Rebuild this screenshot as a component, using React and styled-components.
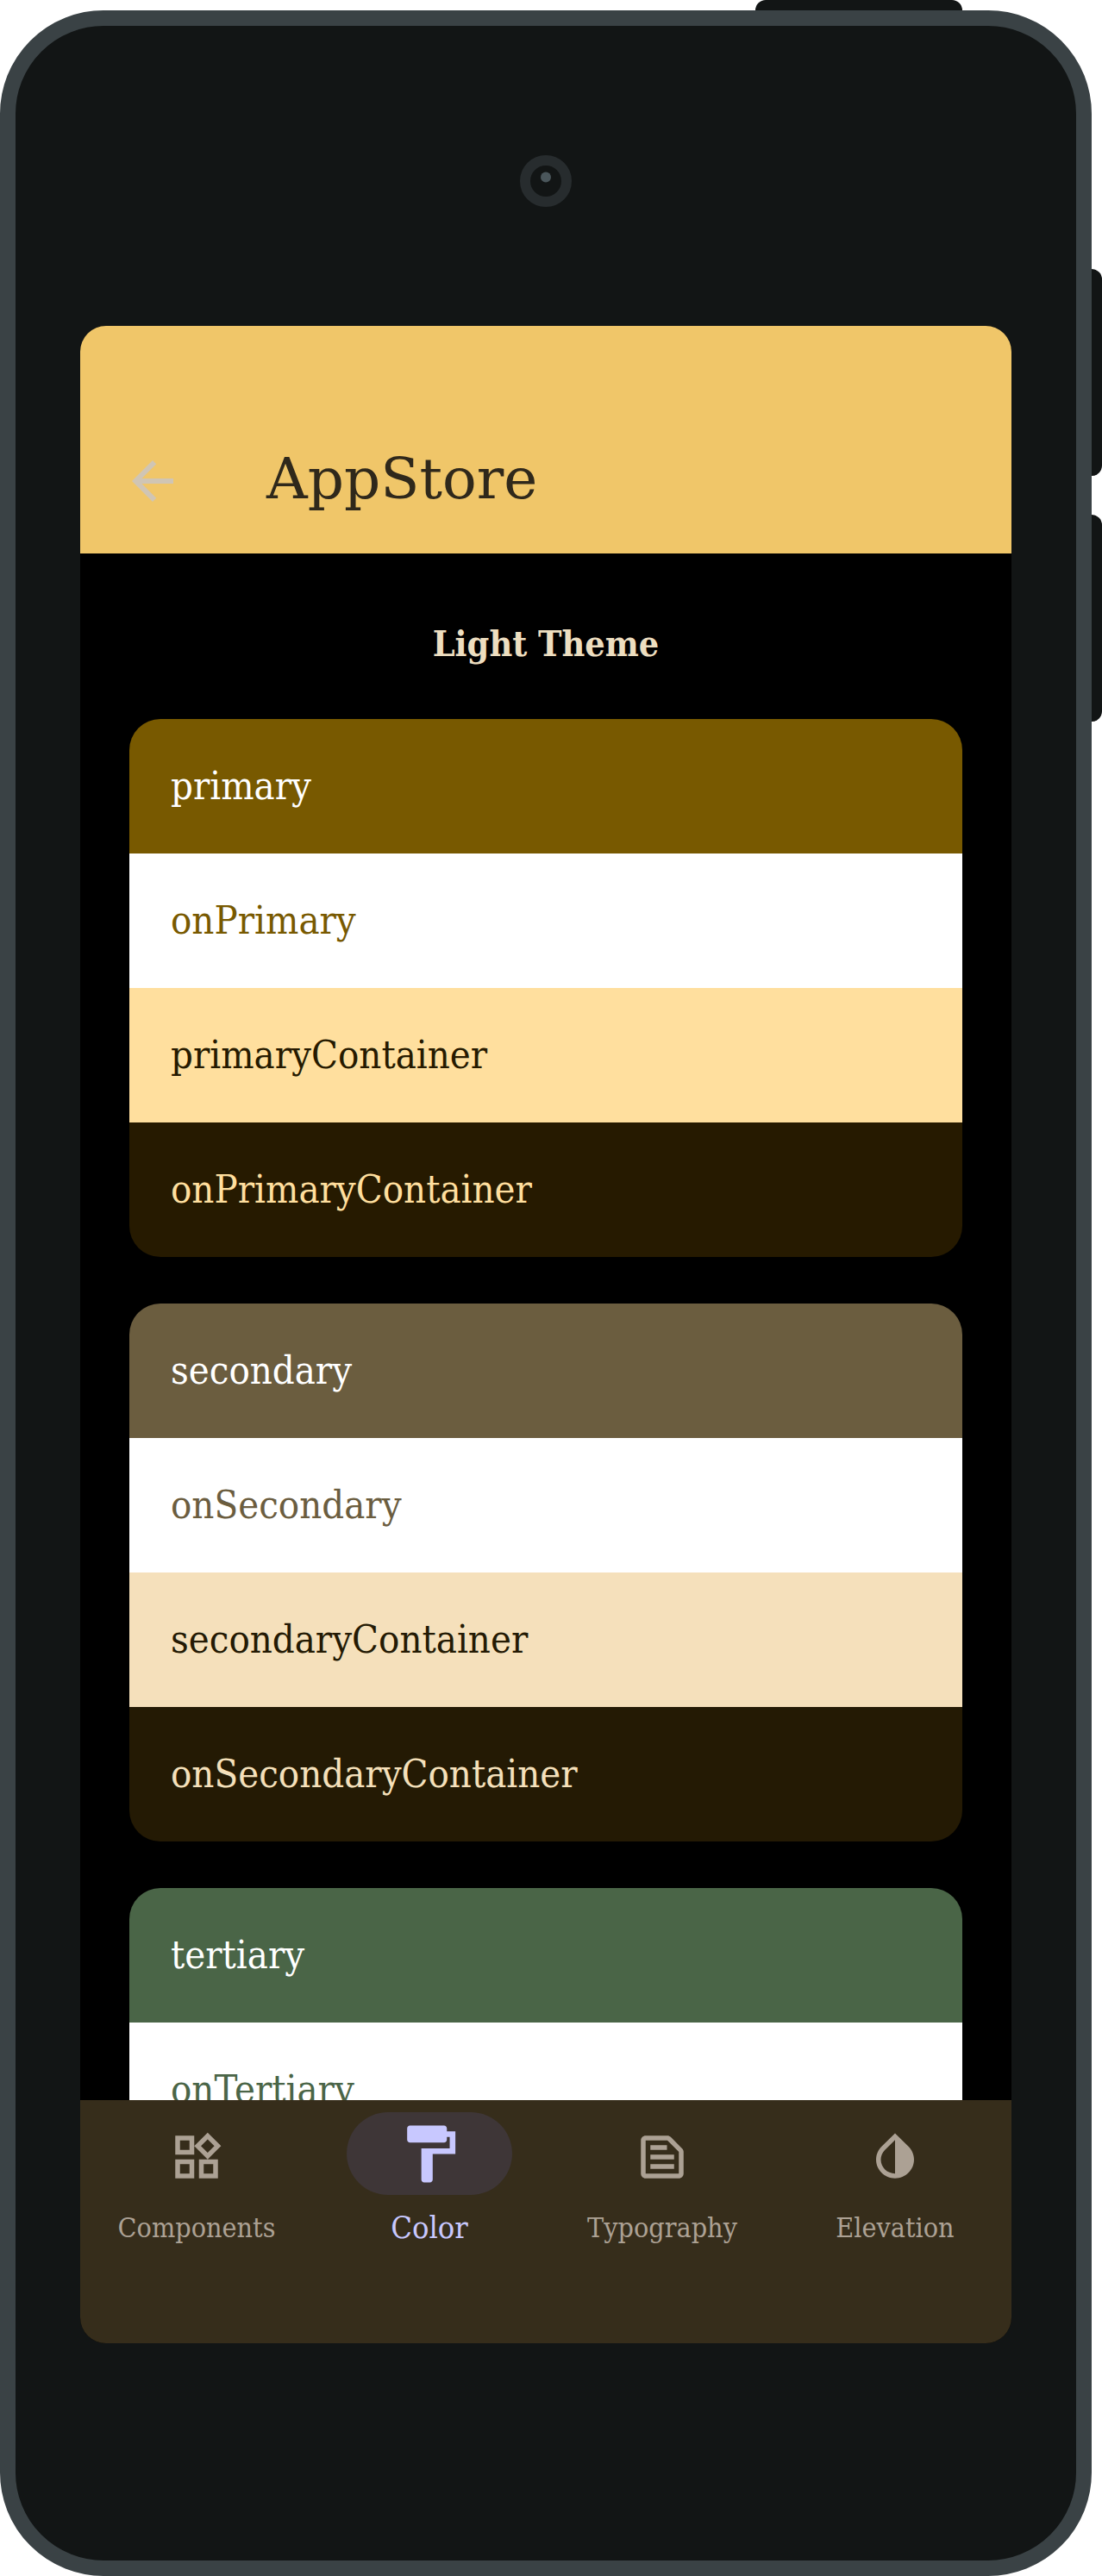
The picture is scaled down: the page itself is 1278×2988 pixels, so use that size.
import React from "react";
import styled, { createGlobalStyle } from "styled-components";

const GlobalStyle = createGlobalStyle`
  *, *::before, *::after { box-sizing: border-box; }
  body {
    margin: 0;
    background: #ffffff;
    font-family: "DejaVu Serif Condensed", "DejaVu Serif", serif;
  }
`;

const Device = styled.div`
  display: grid;
  grid-template-columns: minmax(0, 1fr) 12px;
  grid-template-rows: 12px minmax(0, 1fr);
  height: 100vh;
`;

const TopKeys = styled.div`
  display: flex;
  justify-content: flex-end;
  grid-column: 1 / -1;
  padding-right: 162px;
`;

const TopKey = styled.div`
  width: 240px;
  background: #121515;
  border-radius: 12px 12px 0 0;
`;

const SideKeys = styled.div`
  display: flex;
  flex-direction: column;
  gap: 45px;
  padding-top: 300px;
`;

const SideKey = styled.div`
  height: 240px;
  background: #121515;
  border-radius: 0 12px 12px 0;
`;

const Body = styled.div`
  display: flex;
  flex-direction: column;
  padding: 0 75px 252px;
  background: #121515;
  border: 18px solid #3a4245;
  border-radius: 120px;
`;

const Forehead = styled.div`
  display: flex;
  flex: none;
  align-items: center;
  justify-content: center;
  height: 348px;
  padding-top: 12px;
`;

const Screen = styled.div`
  display: flex;
  flex: 1;
  flex-direction: column;
  min-height: 0;
  overflow: hidden;
  background: #000000;
  border-radius: 30px;
`;

const AppBar = styled.header`
  display: flex;
  flex: none;
  align-items: center;
  gap: 96px;
  height: 264px;
  padding: 96px 48px 0;
  background: #f0c669;
`;

const BackButton = styled.button`
  display: flex;
  padding: 0;
  color: #d0c5b4;
  background: none;
  border: 0;
`;

const Title = styled.h1`
  margin: 0;
  padding-bottom: 4px;
  color: #2f281b;
  font: 400 66px/84px "DejaVu Serif", serif;
`;

const Content = styled.main`
  flex: 1;
  min-height: 0;
  padding: 72px 57px 0;
  overflow: hidden;
`;

const ThemeHeading = styled.h2`
  margin: 0 0 54px;
  color: #eddec0;
  font-size: 41px;
  font-weight: 700;
  line-height: 66px;
  text-align: center;
`;

const Palettes = styled.div`
  display: flex;
  flex-direction: column;
  gap: 54px;
`;

const Palette = styled.ul`
  flex: none;
  margin: 0;
  padding: 0;
  overflow: hidden;
  list-style: none;
  border-radius: 36px;
`;

const Swatch = styled.li`
  display: flex;
  align-items: center;
  height: 156px;
  padding: 0 48px;
  color: ${({ $ink }) => $ink};
  font-size: 45px;
  line-height: 72px;
  background: ${({ $fill }) => $fill};
`;

const NavBar = styled.nav`
  display: grid;
  flex: none;
  grid-template-columns: repeat(4, minmax(0, 1fr));
  align-items: start;
  height: 282px;
  padding-top: 14px;
  background: #362d1b;
`;

const NavItem = styled.button`
  display: flex;
  flex-direction: column;
  align-items: center;
  gap: 11px;
  padding: 0;
  color: ${({ $active }) => ($active ? "#c8c8ff" : "#aca194")};
  font-family: inherit;
  font-size: ${({ $active }) => ($active ? 36 : 32)}px;
  line-height: 54px;
  background: none;
  border: 0;
`;

const Indicator = styled.span`
  display: flex;
  align-items: center;
  justify-content: center;
  width: 192px;
  height: 96px;
  padding-top: ${({ $active }) => ($active ? 0 : 8)}px;
  background: ${({ $active }) => ($active ? "#3e3637" : "transparent")};
  border-radius: 48px;
`;

function Icon({ size, path }) {
  return (
    <svg width={size} height={size} viewBox="0 0 24 24" fill="currentColor" aria-hidden="true">
      <path d={path} />
    </svg>
  );
}

const BACK = "M20 11H7.83l5.59-5.59L12 4l-8 8 8 8 1.41-1.41L7.83 13H20v-2z";

const PALETTES = [
  [
    ["primary", "#785900", "#ffffff"],
    ["onPrimary", "#ffffff", "#785900"],
    ["primaryContainer", "#ffdf9e", "#261a00"],
    ["onPrimaryContainer", "#261a00", "#ffdf9e"],
  ],
  [
    ["secondary", "#6b5d3f", "#ffffff"],
    ["onSecondary", "#ffffff", "#6b5d3f"],
    ["secondaryContainer", "#f5e0bb", "#241a04"],
    ["onSecondaryContainer", "#241a04", "#f5e0bb"],
  ],
  [
    ["tertiary", "#4a6547", "#ffffff"],
    ["onTertiary", "#ffffff", "#4a6547"],
  ],
];

const TABS = [
  {
    label: "Components",
    path: "M16.66 4.52l2.83 2.83-2.83 2.83-2.83-2.83 2.83-2.83M9 5v4H5V5h4m10 10v4h-4v-4h4M9 15v4H5v-4h4m7.66-13.31L11 7.34 16.66 13l5.66-5.66-5.66-5.65zM11 3H3v8h8V3zm10 10h-8v8h8v-8zm-10 0H3v8h8v-8z",
  },
  {
    label: "Color",
    active: true,
    path: "M18 4V3c0-.55-.45-1-1-1H5c-.55 0-1 .45-1 1v4c0 .55.45 1 1 1h12c.55 0 1-.45 1-1V6h1v4H9v11c0 .55.45 1 1 1h2c.55 0 1-.45 1-1v-9h8V4h-3z",
  },
  {
    label: "Typography",
    path: "M14.17 5L19 9.83V19H5V5h9.17m0-2H5c-1.1 0-2 .9-2 2v14c0 1.1.9 2 2 2h14c1.1 0 2-.9 2-2V9.83c0-.53-.21-1.04-.59-1.41l-4.83-4.83c-.37-.38-.88-.59-1.41-.59zM7 15h10v2H7v-2zm0-4h10v2H7v-2zm0-4h7v2H7V7z",
  },
  {
    label: "Elevation",
    path: "M12 4.81V19c-3.31 0-6-2.63-6-5.87 0-1.56.62-3.03 1.75-4.14L12 4.81M6.35 7.56C4.9 8.99 4 10.96 4 13.13 4 17.48 7.58 21 12 21s8-3.52 8-7.87c0-2.17-.9-4.14-2.35-5.57L12 2 6.35 7.56z",
  },
];

export default function App() {
  return (
    <>
      <GlobalStyle />
      <Device>
        <TopKeys>
          <TopKey />
        </TopKeys>
        <Body>
          <Forehead>
            <svg width="60" height="60" viewBox="0 0 60 60" aria-hidden="true">
              <circle cx="30" cy="30" r="24" fill="#121515" stroke="#272c2e" strokeWidth="12" />
              <circle cx="30" cy="25.5" r="6" fill="#4a565b" />
            </svg>
          </Forehead>
          <Screen>
            <AppBar>
              <BackButton type="button" aria-label="Back">
                <Icon size={72} path={BACK} />
              </BackButton>
              <Title>AppStore</Title>
            </AppBar>
            <Content>
              <ThemeHeading>Light Theme</ThemeHeading>
              <Palettes>
                {PALETTES.map((rows) => (
                  <Palette key={rows[0][0]}>
                    {rows.map(([name, fill, ink]) => (
                      <Swatch key={name} $fill={fill} $ink={ink}>
                        {name}
                      </Swatch>
                    ))}
                  </Palette>
                ))}
              </Palettes>
            </Content>
            <NavBar>
              {TABS.map(({ label, path, active }) => (
                <NavItem key={label} type="button" $active={active} aria-current={active ? "page" : undefined}>
                  <Indicator $active={active}>
                    <Icon size={active ? 79 : 66} path={path} />
                  </Indicator>
                  {label}
                </NavItem>
              ))}
            </NavBar>
          </Screen>
        </Body>
        <SideKeys>
          <SideKey />
          <SideKey />
        </SideKeys>
      </Device>
    </>
  );
}
